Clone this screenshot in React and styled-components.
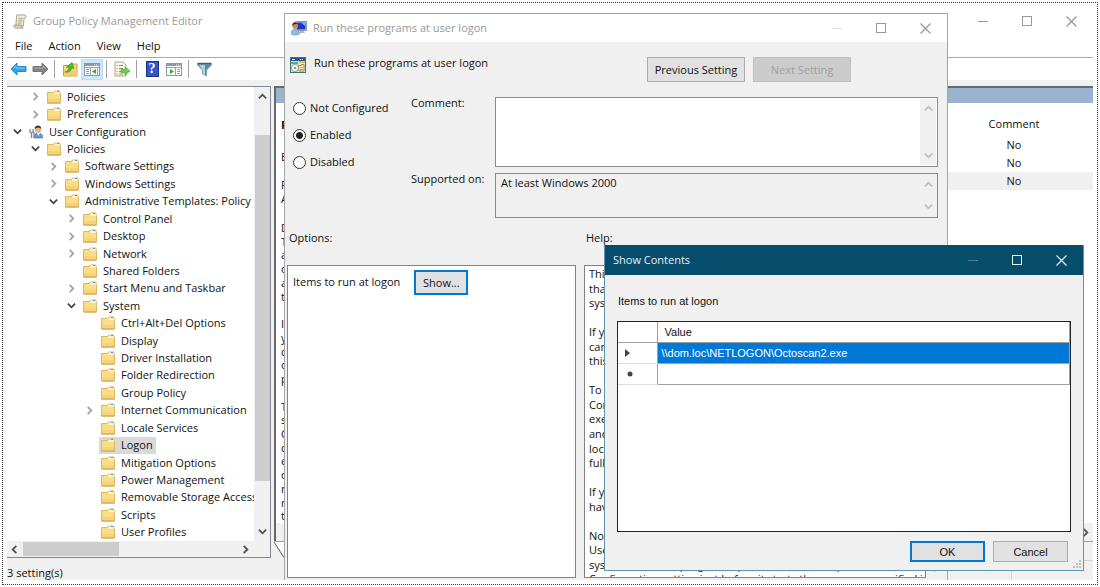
import styled, { createGlobalStyle, css } from "styled-components";

const GlobalStyle = createGlobalStyle`
  * {
    box-sizing: border-box;
  }
  body {
    margin: 0;
    background: #fff;
    color: #111;
    font-family: "Open Sans", "Noto Sans", sans-serif;
    font-size: 11px;
    line-height: 14px;
  }
  button, textarea, input {
    font: inherit;
    color: inherit;
    margin: 0;
  }
  ul {
    list-style: none;
    margin: 0;
    padding: 0;
  }
  h1, h2, p {
    margin: 0;
    font-size: inherit;
    font-weight: 400;
  }
  svg {
    display: block;
    flex: none;
  }
`;

const Frame = styled.div`
  display: flex;
  height: calc(100vh - 4px);
  min-height: 560px;
  margin: 2px;
  padding: 4px;
  border: 1px dotted #333;
`;

const Desktop = styled.div`
  position: relative;
  flex: 1;
  display: flex;
  min-width: 0;
  overflow: hidden;
`;

const Editor = styled.main`
  flex: 1;
  display: flex;
  flex-direction: column;
  min-width: 0;
`;

const TitleBar = styled.header`
  display: flex;
  align-items: center;
  gap: 6px;
  height: 28px;
  flex: none;
  padding-left: 6px;
  color: #999;
  background: #fff;
  h1 {
    flex: 1;
  }
`;

const DarkTitle = styled(TitleBar)`
  height: 30px;
  padding-left: 8px;
  color: #e8f0f4;
  background: #054d6b;
`;

const Controls = styled.div`
  display: flex;
`;

const ControlButton = styled.button`
  display: flex;
  align-items: center;
  justify-content: center;
  width: 44px;
  height: 28px;
  padding: 0;
  border: 0;
  background: none;
  color: ${props => props.$dark ? "#e8f0f4" : "#999"};
  opacity: ${props => props.$faint ? 0.3 : 1};
`;

const MenuBar = styled.nav`
  display: flex;
  gap: 16px;
  height: 23px;
  flex: none;
  padding: 4px 8px 0;
  border-bottom: 1px solid #aaa;
  button {
    padding: 0;
    border: 0;
    background: none;
    line-height: 14px;
    align-self: flex-start;
  }
`;

const Toolbar = styled.div`
  display: flex;
  align-items: center;
  height: 22px;
  flex: none;
`;

const Tool = styled.button`
  display: flex;
  align-items: center;
  justify-content: center;
  width: 22px;
  height: 21px;
  padding: 0;
  border: 1px solid ${props => props.$active ? "#b5dcf9" : "transparent"};
  background: ${props => props.$active ? "#cce8ff" : "none"};
`;

const Separator = styled.span`
  width: 1px;
  height: 18px;
  margin: 0 4px 0 3px;
  background: #a0a0a0;
`;

const Workspace = styled.div`
  flex: 1;
  display: flex;
  gap: 3px;
  min-height: 0;
  padding-top: 6px;
  background: #f0f0f0;
`;

const TreePane = styled.section`
  display: flex;
  flex-direction: column;
  width: 264px;
  flex: none;
  border: 1px solid #828790;
  border-left: 0;
  background: #fff;
`;

const TreeBody = styled.div`
  flex: 1;
  display: flex;
  min-height: 0;
`;

const Tree = styled.ul`
  flex: 1;
  display: flex;
  flex-direction: column;
  min-width: 0;
  padding-top: 1px;
  overflow: hidden;
`;

const TreeItem = styled.li`
  flex: 1;
  display: flex;
  align-items: center;
  min-height: 0;
  padding-left: ${props => props.$level * 18 + 4}px;
  white-space: nowrap;
`;

const Twisty = styled.span`
  display: flex;
  justify-content: center;
  width: 12px;
  margin-right: 4px;
  flex: none;
`;

const TreeLabel = styled.span`
  display: flex;
  align-items: center;
  gap: 6px;
  height: 17px;
  padding: 0 3px 0 2px;
  background: ${props => props.$selected ? "#d9d9d9" : "none"};
`;

const VScroll = styled.div`
  display: flex;
  flex-direction: column;
  align-items: center;
  justify-content: space-between;
  flex: none;
  width: ${props => props.$width || 16}px;
  padding: 5px 0;
  background: #f0f0f0;
`;

const VThumb = styled.span`
  width: 15px;
  height: 78%;
  margin-bottom: 12px;
  background: #cdcdcd;
`;

const HScroll = styled.div`
  display: flex;
  align-items: center;
  height: 16px;
  flex: none;
  padding: 0 20px 0 3px;
  background: #f0f0f0;
`;

const HThumb = styled.span`
  width: 96px;
  height: 14px;
  margin: 0 auto 0 4px;
  background: #cdcdcd;
`;

const DetailPane = styled.section`
  flex: 1;
  display: flex;
  flex-direction: column;
  min-width: 0;
  border-top: 2px solid #696969;
`;

const DetailMain = styled.div`
  flex: 1;
  display: flex;
  flex-direction: column;
  min-height: 0;
  border-left: 2px solid #696969;
  background: #fff;
`;

const BlueHeader = styled.div`
  height: 15px;
  flex: none;
  background: #99b4d1;
`;

const DetailColumns = styled.div`
  flex: 1;
  display: flex;
  justify-content: space-between;
  min-height: 0;
`;

const Description = styled.div`
  display: flex;
  flex-direction: column;
  width: 230px;
  padding: 15px 0 0 5px;
  white-space: nowrap;
  overflow: hidden;
`;

const PolicyName = styled.h2`
  margin-bottom: 18px;
  font-weight: 700;
`;

const Requirements = styled.p`
  margin: 14px 0 15px;
`;

const LineList = styled.div`
  flex: 1;
  display: flex;
  flex-direction: column;
  min-height: 0;
  white-space: nowrap;
  span {
    flex: 1;
    min-height: 0;
  }
`;

const SettingsTable = styled.table`
  width: 146px;
  align-self: flex-start;
  margin-top: 8px;
  border-collapse: collapse;
  text-align: center;
  th, td {
    height: 18px;
    padding: 0 12px 0 0;
    font-weight: 400;
  }
  th {
    height: 25px;
  }
  tr:last-child td {
    background: #f0f0f0;
  }
`;

const DetailScroll = styled.div`
  display: flex;
  align-items: center;
  justify-content: flex-end;
  height: 18px;
  flex: none;
  padding-right: 3px;
  background: #f0f0f0;
`;

const TabStrip = styled.div`
  height: 17px;
  flex: none;
  border-top: 1px solid #a0a0a0;
`;

const StatusBar = styled.footer`
  display: flex;
  justify-content: space-between;
  height: 22px;
  flex: none;
  background: #f0f0f0;
  span:first-child {
    padding-top: 8px;
  }
`;

const StatusCell = styled.span`
  width: 82px;
  margin-top: 2px;
  border-left: 1px solid #d5d5d5;
  border-top: 1px solid #d5d5d5;
`;

const PolicyDialog = styled.section`
  position: absolute;
  top: 6px;
  left: 277px;
  right: 145px;
  bottom: -8px;
  display: flex;
  flex-direction: column;
  border: 1px solid #a5a5a5;
  background: #f0f0f0;
`;

const DialogHeader = styled.div`
  display: flex;
  gap: 8px;
  padding: 15px 96px 0 5px;
  h2 {
    flex: 1;
    align-self: flex-start;
    line-height: 12px;
  }
`;

const button = css`
  padding: 0;
  border: 1px solid #adadad;
  background: #e1e1e1;
  text-align: center;
`;

const SettingButton = styled.button`
  ${button}
  width: 98px;
  height: 25px;
  &:disabled {
    border-color: #bfbfbf;
    background: #ccc;
    color: #a0a0a0;
  }
`;

const StateForm = styled.form`
  display: grid;
  grid-template-columns: 118px 84px 1fr;
  padding: 15px 9px 0 8px;
`;

const RadioGroup = styled.div`
  display: flex;
  flex-direction: column;
  gap: 13px;
  grid-row: span 2;
  padding-top: 4px;
`;

const RadioLabel = styled.label`
  display: flex;
  align-items: center;
  gap: 4px;
`;

const Radio = styled.input`
  appearance: none;
  width: 13px;
  height: 13px;
  border: 1px solid #333;
  border-radius: 50%;
  background: #fff;
  &:checked {
    background: radial-gradient(circle, #222 0 3px, #fff 4px);
  }
`;

const FieldLabel = styled.label`
  line-height: 12px;
`;

const FieldBox = styled.div`
  display: flex;
  height: ${props => props.$height}px;
  margin-bottom: 6px;
  padding: 1px;
  border: 1px solid #8a8a8a;
  background: ${props => props.$readOnly ? "#f0f0f0" : "#fff"};
`;

const FieldText = styled.textarea`
  flex: 1;
  min-width: 0;
  padding: 1px 4px;
  border: 0;
  outline: 0;
  resize: none;
  background: none;
`;

const PanelLabels = styled.div`
  display: grid;
  grid-template-columns: 297px 1fr;
  padding: 7px 4px 20px;
`;

const Panels = styled.div`
  flex: 1;
  display: flex;
  gap: 8px;
  min-height: 0;
  padding: 0 4px 9px 2px;
`;

const OptionsPanel = styled.div`
  display: flex;
  align-items: flex-start;
  gap: 14px;
  width: 289px;
  padding: 4px 5px;
  border: 1px solid #828282;
  background: #fff;
  label {
    line-height: 24px;
  }
`;

const ShowButton = styled.button`
  ${button}
  width: 54px;
  height: 25px;
  border: 2px solid #0078d7;
`;

const HelpPanel = styled.div`
  flex: 1;
  display: flex;
  min-width: 0;
`;

const HelpText = styled.div`
  flex: 1;
  display: flex;
  min-width: 0;
  padding: 1px 4px 0;
  border: 1px solid #828282;
  background: #fff;
  overflow: hidden;
  ${LineList} {
    margin-bottom: -10px;
  }
`;

const ContentsDialog = styled.section`
  position: absolute;
  top: 238px;
  left: 597px;
  right: 9px;
  bottom: 9px;
  display: flex;
  flex-direction: column;
  border: 1px solid #5f93ab;
  border-top: 0;
  background: #f0f0f0;
`;

const ContentsBody = styled.div`
  flex: 1;
  display: flex;
  flex-direction: column;
  min-height: 0;
  padding: 19px 12px 8px;
  font-family: "Liberation Sans", Arial, sans-serif;
  p {
    padding: 0 1px 13px;
  }
`;

const GridBox = styled.div`
  flex: 1;
  border: 1px solid #222;
  background: #fff;
`;

const ValueGrid = styled.table`
  width: 100%;
  border-collapse: collapse;
  table-layout: fixed;
  th, td {
    height: 21px;
    padding: 0 4px;
    border-right: 1px solid #a0a0a0;
    border-bottom: 1px solid #a0a0a0;
    font-weight: 400;
    text-align: left;
  }
  thead th {
    height: 20px;
    padding-left: 7px;
  }
  tbody th {
    padding-left: 7px;
    border-bottom-color: #ddd;
  }
  col:first-child {
    width: 39px;
  }
`;

const SelectedCell = styled.td`
  background: #0078d7;
  color: #fff;
`;

const ButtonRow = styled.div`
  display: flex;
  justify-content: flex-end;
  gap: 8px;
  padding: 9px 3px 0 0;
`;

const DialogButton = styled.button`
  ${button}
  width: 75px;
  height: 21px;
  ${props => props.$primary && "border: 2px solid #0078d7;"}
`;

const Grip = styled.svg`
  position: absolute;
  right: 1px;
  bottom: 1px;
`;

const Chevron = ({ dir = "down", color = "#505050", size = 9 }) => {
  const points = {
    down: "1,3 5,7 9,3",
    up: "1,7 5,3 9,7",
    left: "7,1 3,5 7,9",
    right: "3,1 7,5 3,9",
  };
  return (
    <svg width={size} height={size} viewBox="0 0 10 10">
      <polyline points={points[dir]} fill="none" stroke={color} strokeWidth="2" />
    </svg>
  );
};

const Folder = () => (
  <svg width="14" height="14" viewBox="0 0 14 14">
    <path d="M.5 2.500h6L7.500 1H13v1.500l.5 1v9.500H.5z" fill="#fbdc87" stroke="#dcb765" />
    <path d="M8 1.500h4.500V4H7z" fill="#fff3c8" />
    <rect x="10" y="1" width="2" height="1" fill="#4c9be0" />
    <path d="M1 9h12v3.500H1z" fill="#f6d27a" />
    <path d="M.5 13h13" stroke="#cfa24a" />
  </svg>
);

const UserIcon = () => (
  <svg width="14" height="14" viewBox="0 0 14 14">
    <path d="M5 13c0-4 2-5 4-5s5 1 5 5z" fill="#5d9bd3" stroke="#376e9f" strokeWidth=".6" />
    <path d="M8 8l1.500 3L11 8z" fill="#fff" />
    <circle cx="9" cy="4.500" r="3.200" fill="#e5b58a" />
    <path d="M5.700 4C5 0 12-1 12.300 4 11 2.500 8 2 5.700 4z" fill="#4a3426" />
    <path d="M1 4v3l1.500 1v5M4 4v3L2.500 8M5 7v6" fill="none" stroke="#6f8ba1" strokeWidth="1.300" />
  </svg>
);

const ScrollIcon = () => (
  <svg width="14" height="15" viewBox="0 0 15 16">
    <path d="M4 1h9c1.500 0 1.500 3 0 3h-1l-1 9H3L4 1z" fill="#f5eedb" stroke="#a69c82" />
    <path d="M1 12h8c0 2 .5 3 2 3H3c-2 0-2-2-2-3z" fill="#e4dac0" stroke="#a69c82" />
    <path d="M5.500 4.500h5M5.300 6.500h5M5 8.500h5M5 10.500h4" stroke="#aaa28e" />
  </svg>
);

const LogonIcon = () => (
  <svg width="16" height="15" viewBox="0 0 16 15">
    <rect x="5" y=".5" width="10.500" height="9" fill="#d8dce4" stroke="#8f98a6" />
    <rect x="6" y="1.500" width="8.500" height="7" fill="#1838c8" />
    <path d="M10 1.500h4.500v4z" fill="#7fa8f5" />
    <path d="M9 10h4l1 2H8z" fill="#b4bac5" />
    <circle cx="4.200" cy="5" r="2.800" fill="#c98e60" />
    <path d="M1.300 5C.5 1 5.500 0 6.300 3 4.500 3 3.300 3 1.300 5z" fill="#3d2a1e" />
    <path d="M0 13c0-4 2-5 4-5s4 1 4.500 5c-2 1.500-6 1.500-8.500 0z" fill="#8cbce6" stroke="#5487b5" strokeWidth=".5" />
  </svg>
);

const PolicyIcon = () => (
  <svg width="16" height="16" viewBox="0 0 16 16">
    <rect x=".5" y=".5" width="15" height="15" fill="#e4e4d4" stroke="#3f7470" />
    <path d="M1 1h14v3H1z" fill="#24558f" />
    <path d="M2 2.500h3M10 2.500h1M12 2.500h1" stroke="#fff" />
    <path d="M9 4h6v2H9z" fill="#f0c23c" />
    <path d="M1 5h7v2H1z" fill="#5fa695" />
    <circle cx="5" cy="11" r="3.600" fill="#eef3f7" stroke="#98a4aa" />
    <circle cx="5" cy="11" r="1" fill="#5a8b5f" />
    <path d="M8.500 8.500h3v-1h2.500V14H9z" fill="#fff3b5" stroke="#9e8c52" />
    <path d="M10 10.500h3M10 12.500h3" stroke="#bfa860" />
  </svg>
);

const Arrow = ({ back }) => (
  <svg width="17" height="14" viewBox="0 0 17 14">
    <path
      d={back ? "M1 7l6-6v3.500h9v5H7V13z" : "M16 7l-6-6v3.500H1v5h9V13z"}
      fill={back ? "#2aa4ea" : "#858585"}
      stroke={back ? "#2f87c4" : "#777"}
    />
    <path d={back ? "M3.500 6.500 6 4v2h9" : "M2 6h9V4l2.500 2.500"} fill="none" stroke={back ? "#7accf5" : "#a8a8a8"} />
  </svg>
);

const FolderUp = () => (
  <svg width="15" height="15" viewBox="0 0 15 15">
    <path d="M.5 3.500h6L8 2h6v12H.5z" fill="#f9d87e" stroke="#cda144" />
    <path d="M1 8h13v5.500H1z" fill="#f4cd70" />
    <path d="M2 10c2.500-.5 3.500-2 4-4.500L3.500 5 9 .5l2 6-2.300-.5C8 9 5.500 11 2 10z" fill="#52bb36" stroke="#35952a" strokeWidth=".7" />
  </svg>
);

const PaneIcon = ({ right }) => (
  <svg width="16" height="13" viewBox="0 0 16 13">
    <rect x=".5" y=".5" width="15" height="12" fill="#fff" stroke="#8e959d" />
    <path d="M1 1h14v2H1z" fill="#8e98a6" />
    <path d="M10 2h1M12 2h1M14 2h.5" stroke="#fff" />
    <path d="M1 4.500h14" stroke="#9aa2ab" />
    <path d={right ? "M9.500 5v8" : "M6.500 5v8M13.500 5v8"} stroke="#9aa2ab" />
    <path d={right ? "M11 6.500h3M11 8.500h3M11 10.500h3" : "M2 6.500h3M2 8.500h3M2 10.500h3"} stroke="#8d9db0" />
    <path d={right ? "M4 6v5l4-2.500z" : "M12 6v5L8 8.500z"} fill="#35a72b" />
  </svg>
);

const ExportIcon = () => (
  <svg width="16" height="16" viewBox="0 0 16 16">
    <path d="M1 1h8l3 3v11H1z" fill="#fdf8e4" stroke="#a9a595" />
    <path d="M2.500 4.500h1M5 4.500h4M2.500 7.500h1M5 7.500h4M2.500 10.500h1M5 10.500h4M2.500 13h1M5 13h4" stroke="#8a8878" />
    <path d="M7 8.500h4V6l5 4-5 4v-2.500H7z" fill="#6fcc4a" stroke="#4ba82e" strokeWidth=".7" />
  </svg>
);

const HelpMark = styled.span`
  width: 13px;
  height: 16px;
  border: 1px solid #1b338f;
  background: #3158c9;
  color: #fff;
  font-family: "Liberation Serif", serif;
  font-size: 14px;
  font-weight: 700;
  line-height: 14px;
`;

const Funnel = () => (
  <svg width="15" height="15" viewBox="0 0 15 15">
    <path d="M.5 1h14v2L9.500 8v6l-4-2V8L.5 3z" fill="#5f889d" stroke="#6a8a9a" strokeWidth=".6" />
    <path d="M2 3h6v10l-2-1V8z" fill="#b3d0dc" />
    <path d="M1 1.500h13" stroke="#3f5f70" />
  </svg>
);

const WindowControls = ({ dark, faintMin }) => (
  <Controls>
    <ControlButton aria-label="Minimize" $dark={dark} $faint={faintMin}>
      <svg width="11" height="11"><path d="M0 5.500h10" stroke="currentColor" /></svg>
    </ControlButton>
    <ControlButton aria-label="Maximize" $dark={dark}>
      <svg width="11" height="11"><rect x=".5" y=".5" width="9" height="9" fill="none" stroke="currentColor" /></svg>
    </ControlButton>
    <ControlButton aria-label="Close" $dark={dark}>
      <svg width="11" height="11"><path d="M.5.5l10 10M10.500.5l-10 10" stroke="currentColor" strokeWidth="1.300" /></svg>
    </ControlButton>
  </Controls>
);

// [level, label, arrow, flag]
const treeItems = [
  [1, "Policies", "right"],
  [1, "Preferences", "right"],
  [0, "User Configuration", "down", "user"],
  [1, "Policies", "down"],
  [2, "Software Settings", "right"],
  [2, "Windows Settings", "right"],
  [2, "Administrative Templates: Policy", "down"],
  [3, "Control Panel", "right"],
  [3, "Desktop", "right"],
  [3, "Network", "right"],
  [3, "Shared Folders"],
  [3, "Start Menu and Taskbar", "right"],
  [3, "System", "down"],
  [4, "Ctrl+Alt+Del Options"],
  [4, "Display"],
  [4, "Driver Installation"],
  [4, "Folder Redirection"],
  [4, "Group Policy"],
  [4, "Internet Communication", "right"],
  [4, "Locale Services"],
  [4, "Logon", null, "selected"],
  [4, "Mitigation Options"],
  [4, "Power Management"],
  [4, "Removable Storage Access"],
  [4, "Scripts"],
  [4, "User Profiles"],
];

const descriptionLines = [
  "Description:",
  "This policy setting specifies",
  "additional programs or",
  "documents that Windows starts",
  "automatically when a user logs on",
  "to the system.",
  "",
  "If you enable this policy setting,",
  "you can specify which programs",
  "can run at the time the user logs",
  "on to this computer that has this",
  "policy applied.",
  "",
  "To specify values for this policy",
  "setting, click Show. In the Show",
  "Contents dialog box in the Value",
  "column, type the name of the",
  "executable program file or",
  "document file. To specify another",
  "name, press ENTER, and type the",
  "name. Unless the file is located in",
  "the %Systemroot% directory,",
];

const helpLines = [
  "This policy setting specifies additional programs or documents",
  "that Windows starts automatically when a user logs on to the",
  "system.",
  "",
  "If you enable this policy setting, you can specify which programs",
  "can run at the time the user logs on to this computer that has",
  "this policy applied.",
  "",
  "To specify values for this policy setting, click Show. In the Show",
  "Contents dialog box in the Value column, type the name of the",
  "executable program (.exe) file or document file. To specify another",
  "and type the name. Unless the file is",
  "located in the %Systemroot% directory, you must specify the",
  "fully qualified path to the file.",
  "",
  "If you disable or do not configure this policy setting, the user will",
  "have to start the appropriate programs after logon.",
  "",
  "Note: This setting appears in the Computer Configuration and",
  "User Configuration folders. If both settings are configured, the",
  "system starts the programs specified in the Computer",
  "Configuration setting just before it starts the programs specified in",
];

const TreeView = () => (
  <TreePane>
    <TreeBody>
      <Tree>
        {treeItems.map(([level, label, arrow, flag], i) =>
          <TreeItem key={i} $level={level}>
            <Twisty>
              {arrow && <Chevron dir={arrow} color={arrow === "down" ? "#404040" : "#a6a6a6"} />}
            </Twisty>
            <TreeLabel $selected={flag === "selected"}>
              {flag === "user" ? <UserIcon /> : <Folder />}
              {label}
            </TreeLabel>
          </TreeItem>
        )}
      </Tree>
      <VScroll>
        <Chevron dir="up" />
        <VThumb />
        <Chevron />
      </VScroll>
    </TreeBody>
    <HScroll>
      <Chevron dir="left" />
      <HThumb />
      <Chevron dir="right" />
    </HScroll>
  </TreePane>
);

const Lines = ({ lines }) => (
  <LineList>
    {lines.map((line, i) => <span key={i}>{line}</span>)}
  </LineList>
);

const Details = () => (
  <DetailPane>
    <DetailMain>
      <BlueHeader />
      <DetailColumns>
        <Description>
          <PolicyName>Run these programs at user logon</PolicyName>
          <p>Edit policy setting</p>
          <Requirements>Requirements:<br />At least Windows 2000</Requirements>
          <Lines lines={descriptionLines} />
        </Description>
        <SettingsTable>
          <thead><tr><th>Comment</th></tr></thead>
          <tbody>
            <tr><td>No</td></tr>
            <tr><td>No</td></tr>
            <tr><td>No</td></tr>
          </tbody>
        </SettingsTable>
      </DetailColumns>
      <DetailScroll><Chevron dir="right" /></DetailScroll>
    </DetailMain>
    <TabStrip>
      <svg width="24" height="16"><path d="M0 0l10 15.500h14V0z" fill="#fff" /><path d="M0 0l10 15.500h14" fill="none" stroke="#555" /></svg>
    </TabStrip>
  </DetailPane>
);

const PolicySettings = () => (
  <PolicyDialog>
    <TitleBar>
      <LogonIcon />
      <h1>Run these programs at user logon</h1>
      <WindowControls faintMin />
    </TitleBar>
    <DialogHeader>
      <PolicyIcon />
      <h2>Run these programs at user logon</h2>
      <SettingButton>Previous Setting</SettingButton>
      <SettingButton disabled>Next Setting</SettingButton>
    </DialogHeader>
    <StateForm>
      <RadioGroup>
        <RadioLabel><Radio type="radio" name="state" />Not Configured</RadioLabel>
        <RadioLabel><Radio type="radio" name="state" defaultChecked />Enabled</RadioLabel>
        <RadioLabel><Radio type="radio" name="state" />Disabled</RadioLabel>
      </RadioGroup>
      <FieldLabel htmlFor="comment">Comment:</FieldLabel>
      <FieldBox $height={70}>
        <FieldText id="comment" />
        <VScroll>
          <Chevron dir="up" color="#bfbfbf" />
          <Chevron color="#bfbfbf" />
        </VScroll>
      </FieldBox>
      <FieldLabel htmlFor="supported">Supported on:</FieldLabel>
      <FieldBox $height={45} $readOnly>
        <FieldText id="supported" readOnly defaultValue="At least Windows 2000" />
        <VScroll>
          <Chevron dir="up" color="#bfbfbf" />
          <Chevron color="#bfbfbf" />
        </VScroll>
      </FieldBox>
    </StateForm>
    <PanelLabels>
      <span>Options:</span>
      <span>Help:</span>
    </PanelLabels>
    <Panels>
      <OptionsPanel>
        <label htmlFor="show">Items to run at logon</label>
        <ShowButton id="show">Show...</ShowButton>
      </OptionsPanel>
      <HelpPanel>
        <HelpText><Lines lines={helpLines} /></HelpText>
        <VScroll $width={17}>
          <Chevron dir="up" />
          <Chevron />
        </VScroll>
      </HelpPanel>
    </Panels>
  </PolicyDialog>
);

const ShowContents = () => (
  <ContentsDialog>
    <DarkTitle>
      <h1>Show Contents</h1>
      <WindowControls dark faintMin />
    </DarkTitle>
    <ContentsBody>
      <p>Items to run at logon</p>
      <GridBox>
        <ValueGrid>
          <colgroup><col /><col /></colgroup>
          <thead>
            <tr><th /><th>Value</th></tr>
          </thead>
          <tbody>
            <tr>
              <th><svg width="6" height="8"><path d="M0 0v8l5-4z" fill="#444" /></svg></th>
              <SelectedCell>{"\\\\dom.loc\\NETLOGON\\Octoscan2.exe"}</SelectedCell>
            </tr>
            <tr>
              <th><svg width="10" height="8"><circle cx="5" cy="4" r="2.500" fill="#444" /></svg></th>
              <td />
            </tr>
          </tbody>
        </ValueGrid>
      </GridBox>
      <ButtonRow>
        <DialogButton $primary>OK</DialogButton>
        <DialogButton>Cancel</DialogButton>
      </ButtonRow>
    </ContentsBody>
    <Grip width="9" height="9">
      <path d="M6 0h2v2H6zM3 3h2v2H3zM6 3h2v2H6zM0 6h2v2H0zM3 6h2v2H3zM6 6h2v2H6z" fill="#bdbdbd" />
    </Grip>
  </ContentsDialog>
);

function App() {
  return (
    <Frame>
      <GlobalStyle />
      <Desktop>
        <Editor>
          <TitleBar>
            <ScrollIcon />
            <h1>Group Policy Management Editor</h1>
            <WindowControls />
          </TitleBar>
          <MenuBar>
            <button>File</button>
            <button>Action</button>
            <button>View</button>
            <button>Help</button>
          </MenuBar>
          <Toolbar>
            <Tool aria-label="Back"><Arrow back /></Tool>
            <Tool aria-label="Forward"><Arrow /></Tool>
            <Separator />
            <Tool aria-label="Up one level"><FolderUp /></Tool>
            <Tool aria-label="Show tree" $active><PaneIcon /></Tool>
            <Separator />
            <Tool aria-label="Export list"><ExportIcon /></Tool>
            <Separator />
            <Tool aria-label="Help"><HelpMark>?</HelpMark></Tool>
            <Tool aria-label="Show actions"><PaneIcon right /></Tool>
            <Separator />
            <Tool aria-label="Filter"><Funnel /></Tool>
          </Toolbar>
          <Workspace>
            <TreeView />
            <Details />
          </Workspace>
          <StatusBar>
            <span>3 setting(s)</span>
            <StatusCell />
          </StatusBar>
        </Editor>
        <PolicySettings />
        <ShowContents />
      </Desktop>
    </Frame>
  );
}

export default App;
